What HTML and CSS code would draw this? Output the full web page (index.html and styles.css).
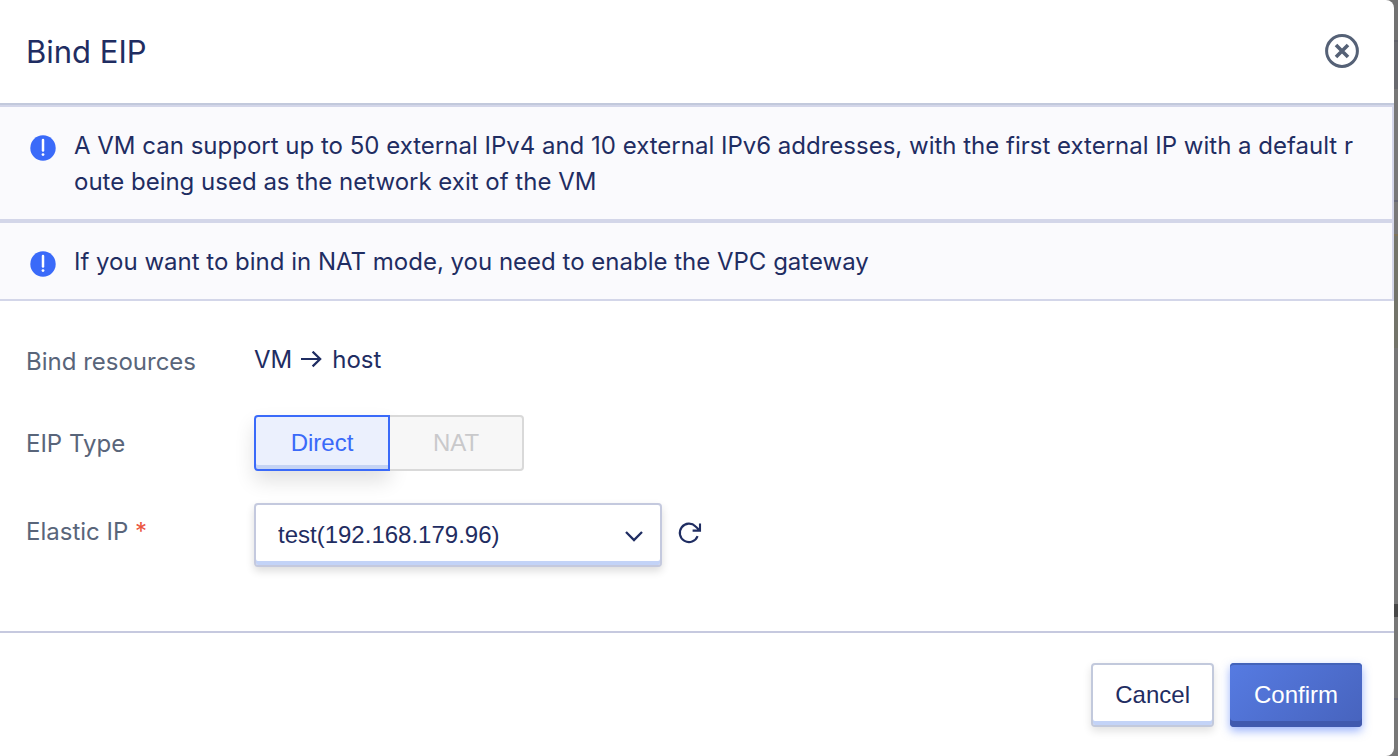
FILE: index.html
```html
<!DOCTYPE html>
<html lang="en">
<head>
<meta charset="utf-8">
<title>Bind EIP</title>
<link rel="stylesheet" href="styles.css">
</head>
<body class="page">
<main class="dialog" role="dialog" aria-labelledby="dialog-title">
  <header class="dialog-header">
    <h1 class="dialog-title" id="dialog-title">Bind EIP</h1>
    <button class="icon-button" type="button" aria-label="Close">
      <svg width="36" height="36" viewBox="0 0 36 36" fill="none" stroke="#556176"><circle cx="18" cy="17" r="15.4" stroke-width="3"/><path d="M12 11l12 12M24 11L12 23" stroke-width="3.6"/></svg>
    </button>
  </header>
  <section class="alert">
    <svg class="alert-icon" width="26" height="26" viewBox="0 0 26 26"><circle cx="13" cy="13" r="12.7" fill="#3a6af9"/><path d="M13 5v10.6" stroke="#fff" stroke-width="2.5" stroke-linecap="round"/><circle cx="13" cy="19.6" r="1.4" fill="#fff"/></svg>
    <p class="alert-text">A VM can support up to 50 external IPv4 and 10 external IPv6 addresses, with the first external IP with a default route being used as the network exit of the VM</p>
  </section>
  <section class="alert">
    <svg class="alert-icon" width="26" height="26" viewBox="0 0 26 26"><circle cx="13" cy="13" r="12.7" fill="#3a6af9"/><path d="M13 5v10.6" stroke="#fff" stroke-width="2.5" stroke-linecap="round"/><circle cx="13" cy="19.6" r="1.4" fill="#fff"/></svg>
    <p class="alert-text">If you want to bind in NAT mode, you need to enable the VPC gateway</p>
  </section>
  <form class="form">
    <div class="row row-top">
      <span class="label">Bind resources</span>
      <div class="value">VM
        <svg width="22" height="18" viewBox="0 0 22 18" fill="none" stroke="#1f2d62" stroke-width="2.2" role="img" aria-label="to"><path d="M0 8h19.6M11.6 .6L19.2 8l-7.6 7.4"/></svg>
        host</div>
    </div>
    <div class="row row-type" role="radiogroup" aria-labelledby="type-label">
      <span class="label" id="type-label">EIP Type</span>
      <div class="segments">
        <label class="segment"><input class="segment-input" type="radio" name="type" checked>Direct</label>
        <label class="segment segment-disabled"><input class="segment-input" type="radio" name="type" disabled>NAT</label>
      </div>
    </div>
    <div class="row row-select">
      <label class="label" for="elastic-ip">Elastic IP <span class="required">*</span></label>
      <div class="select-group">
        <div class="select-box">
          <select class="select" id="elastic-ip"><option>test(192.168.179.96)</option></select>
          <svg class="chevron" width="18" height="12" viewBox="0 0 18 12" fill="none" stroke="#1f2d62" stroke-width="2.3"><path d="M1 2l8 8 8-8"/></svg>
        </div>
        <button class="icon-button refresh" type="button" aria-label="Refresh">
          <svg width="24" height="24" viewBox="0 0 24 24" fill="none" stroke="#1f2d62" stroke-width="2.1"><path d="M19.6 15.2A9.2 9.2 0 1 1 17.6 5.4L21.6 9.2M22 2.4V9.6h-7.4"/></svg>
        </button>
      </div>
    </div>
  </form>
  <footer class="dialog-footer">
    <button class="button" type="button">Cancel</button>
    <button class="button button-primary" type="button">Confirm</button>
  </footer>
</main>
</body>
</html>
```
FILE: styles.css
```css
*, *::before, *::after { box-sizing: border-box; }

.page {
  margin: 0;
  padding-right: 4px;
  color: #1f2d62;
  font-family: Inter, "Liberation Sans", sans-serif;
  font-size: 24px;
  line-height: 36px;
  background: linear-gradient(#727272 0 40px, #606169 40px 42px, #68696e 42px 89px, #777 89px 200px, #666875 200px 202px, #787878 202px 234px, #80745a 234px 236px, #73746a 236px 348px, #777 348px 604px, #484848 604px 617px, #777 617px 698px, #666875 698px 700px, #777 700px);
}

.dialog {
  display: flex;
  flex-direction: column;
  min-height: 100vh;
  background: #fff;
  border-radius: 0 8px 8px 0;
}

.dialog-header {
  display: flex;
  align-items: center;
  justify-content: space-between;
  padding: 32px 34px 32px 26px;
  border-bottom: 2px solid #c2c9dc;
}

.dialog-title {
  margin: 0;
  font-size: 31px;
  font-weight: 400;
  line-height: 39px;
}

.icon-button {
  display: flex;
  padding: 0;
  border: 0;
  background: none;
}

.alert {
  display: flex;
  gap: 18px;
  padding: 21px 28px 19px 30px;
  background: #fafafd;
  border: 2px solid #d3d6e9;
  border-left: 0;
}

.alert-icon { flex: none; margin-top: 7px; }

.alert-text { margin: 0; word-break: break-all; }

.form {
  display: flex;
  flex-direction: column;
  flex: 1;
  gap: 32px;
  padding: 41px 26px 64px;
}

.row {
  display: grid;
  grid-template-columns: 228px 1fr;
  align-items: start;
}

.row-top { padding-bottom: 3px; }
.row-top .label { padding-top: 2px; }
.row-type .label,
.row-select .label { padding-top: 11px; }

.label { color: #59657a; }
.required { color: #eb5540; }

.value {
  display: flex;
  align-items: center;
  gap: 9px;
}

.segments {
  display: flex;
  font-family: "Liberation Sans", Arial, sans-serif;
}

.segment {
  width: 136px;
  padding: 8px 0;
  text-align: center;
  color: #3a6af9;
  background: #ebf0fd;
  border: 2px solid #3a6af9;
  border-radius: 4px 0 0 4px;
  box-shadow: inset 0 -4px #c4d3f4, 0 10px 20px rgba(0, 0, 0, .12);
}

.segment-disabled {
  width: 134px;
  color: #c9c9cb;
  background: #f7f7f7;
  border-color: #d9d9d9;
  border-left: 0;
  border-radius: 0 4px 4px 0;
  box-shadow: none;
}

.segment-input {
  position: absolute;
  opacity: 0;
}

.select-group {
  display: flex;
  align-items: start;
  gap: 16px;
}

.refresh { margin-top: 18px; }

.select-box { position: relative; width: 408px; }

.select {
  display: block;
  width: 100%;
  height: 64px;
  padding: 0 52px 2px 22px;
  appearance: none;
  color: inherit;
  font: 24px "Liberation Sans", Arial, sans-serif;
  background: #fff;
  border: 2px solid #c4c9de;
  border-radius: 4px;
  box-shadow: inset 0 -4px #c3d3f7, 0 4px 8px rgba(0, 0, 0, .14);
}

.chevron {
  position: absolute;
  top: 27px;
  right: 19px;
  pointer-events: none;
}

.dialog-footer {
  display: flex;
  justify-content: flex-end;
  gap: 16px;
  padding: 30px 32px 29px;
  border-top: 2px solid #c6c9df;
}

.button {
  height: 64px;
  padding: 0 22px;
  color: inherit;
  font: 24px "Liberation Sans", Arial, sans-serif;
  background: #fff;
  border: 2px solid #c2c9dc;
  border-radius: 4px;
  box-shadow: inset 0 -4px #c3d3f7, 0 4px 8px rgba(0, 0, 0, .12);
}

.button-primary {
  padding: 0 24px;
  color: #fff;
  background: linear-gradient(135deg, #567be2, #4763bd);
  border: 0;
  box-shadow: inset 0 2px #4363b9, inset 0 -6px #4059ae, 0 4px 10px rgba(58, 106, 249, .5);
}
```
